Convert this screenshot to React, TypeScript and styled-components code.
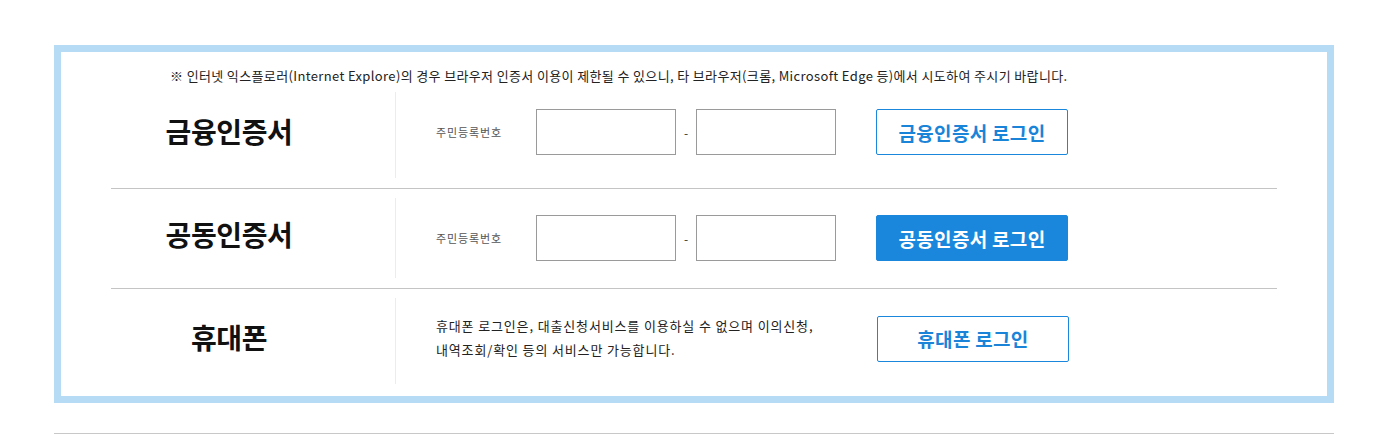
import React from "react";
import styled, { createGlobalStyle } from "styled-components";

const GlobalStyle = createGlobalStyle`
    html, body {
        margin: 0;
        padding: 0;
        background: #fff;
    }
    body {
        font-family: "Noto Sans CJK KR", "Noto Sans", sans-serif;
        color: #222;
    }
    * {
        box-sizing: border-box;
    }
`

type LoginRow = {
    title: string
    button: string
    filled?: boolean
    height: number
    lift: number
    description?: string[]
}

const rows: LoginRow[] = [
    { title: "금융인증서", button: "금융인증서 로그인", height: 86, lift: 6 },
    { title: "공동인증서", button: "공동인증서 로그인", filled: true, height: 80, lift: 0 },
    {
        title: "휴대폰",
        button: "휴대폰 로그인",
        height: 86,
        lift: 5,
        description: [
            "휴대폰 로그인은, 대출신청서비스를 이용하실 수 없으며 이의신청,",
            "내역조회/확인 등의 서비스만 가능합니다.",
        ],
    },
]

export default function App() {
    return (
        <Page>
            <GlobalStyle />
            <LoginBox>
                <Notice>
                    ※ 인터넷 익스플로러(Internet Explore)의 경우 브라우저 인증서 이용이 제한될 수 있으니, 타 브라우저(크롬, Microsoft Edge 등)에서 시도하여 주시기 바랍니다.
                </Notice>
                {rows.map((row, i) => (
                    <Row key={row.title} last={i === rows.length - 1}>
                        <Title>{row.title}</Title>
                        <Body height={row.height} lift={row.lift}>
                            {row.description ? (
                                <Description>
                                    {row.description.map((line) => (
                                        <span key={line}>{line}</span>
                                    ))}
                                </Description>
                            ) : (
                                <>
                                    <FieldLabel>주민등록번호</FieldLabel>
                                    <Input type="text" />
                                    <Dash>-</Dash>
                                    <Input type="password" />
                                </>
                            )}
                            <LoginButton filled={row.filled} shift={row.description ? 1 : 0}>
                                {row.button}
                            </LoginButton>
                        </Body>
                    </Row>
                ))}
            </LoginBox>
            <BottomLine />
        </Page>
    )
}

const Page = styled.div`
    width: 1334px;
    padding: 45px 0 0 54px;
`

const LoginBox = styled.div`
    width: 1280px;
    padding: 0 50px 2px;
    border: 7px solid #b6dbf5;
    background: #fff;
`

const Notice = styled.p`
    margin: 0;
    padding: 17px 0 0 59px;
    height: 31px;
    font-size: 13px;
    line-height: 14px;
    letter-spacing: 0.36px;
    color: #222;
    white-space: nowrap;
`

const Row = styled.div<{ last?: boolean }>`
    display: flex;
    align-items: stretch;
    padding: 9px 0 10px;
    border-bottom: ${(props) => (props.last ? "none" : "1px solid #c4c4c4")};
`

const Title = styled.h2`
    display: flex;
    align-items: center;
    justify-content: center;
    width: 284px;
    margin: 0;
    padding: 0 48px 9px 0;
    font-size: 28px;
    font-weight: 700;
    letter-spacing: -0.4px;
    color: #111;
`

const Body = styled.div<{ height: number; lift: number }>`
    display: flex;
    align-items: center;
    height: ${(props) => props.height}px;
    padding-left: 40px;
    padding-bottom: ${(props) => props.lift}px;
    border-left: 1px solid #ececec;
`

const FieldLabel = styled.span`
    width: 100px;
    font-size: 11px;
    color: #555;
    letter-spacing: 0.9px;
`

const Input = styled.input`
    width: 140px;
    height: 46px;
    margin: 0;
    padding: 0 8px;
    border: 1px solid #9a9a9a;
    border-radius: 0;
    background: #fff;
    font-family: inherit;
    outline: none;
`

const Dash = styled.span`
    width: 20px;
    text-align: center;
    font-size: 12px;
    color: #333;
`

const Description = styled.p`
    display: flex;
    flex-direction: column;
    width: 400px;
    margin: 0;
    padding-bottom: 2px;
    font-size: 13px;
    line-height: 24px;
    letter-spacing: 0.85px;
    color: #222;
    white-space: nowrap;
`

const LoginButton = styled.button<{ filled?: boolean; shift: number }>`
    width: 192px;
    height: 46px;
    margin-left: ${(props) => 40 + props.shift}px;
    padding: 0;
    border: 1px solid #1a87dc;
    border-radius: 2px;
    background: ${(props) => (props.filled ? "#1a87dc" : "#fff")};
    color: ${(props) => (props.filled ? "#fff" : "#1a84d8")};
    font-family: inherit;
    font-size: 19px;
    font-weight: 700;
    letter-spacing: 0.3px;
    cursor: pointer;
`

const BottomLine = styled.div`
    width: 1280px;
    height: 1px;
    margin-top: 30px;
    background: #c8c8c8;
`
